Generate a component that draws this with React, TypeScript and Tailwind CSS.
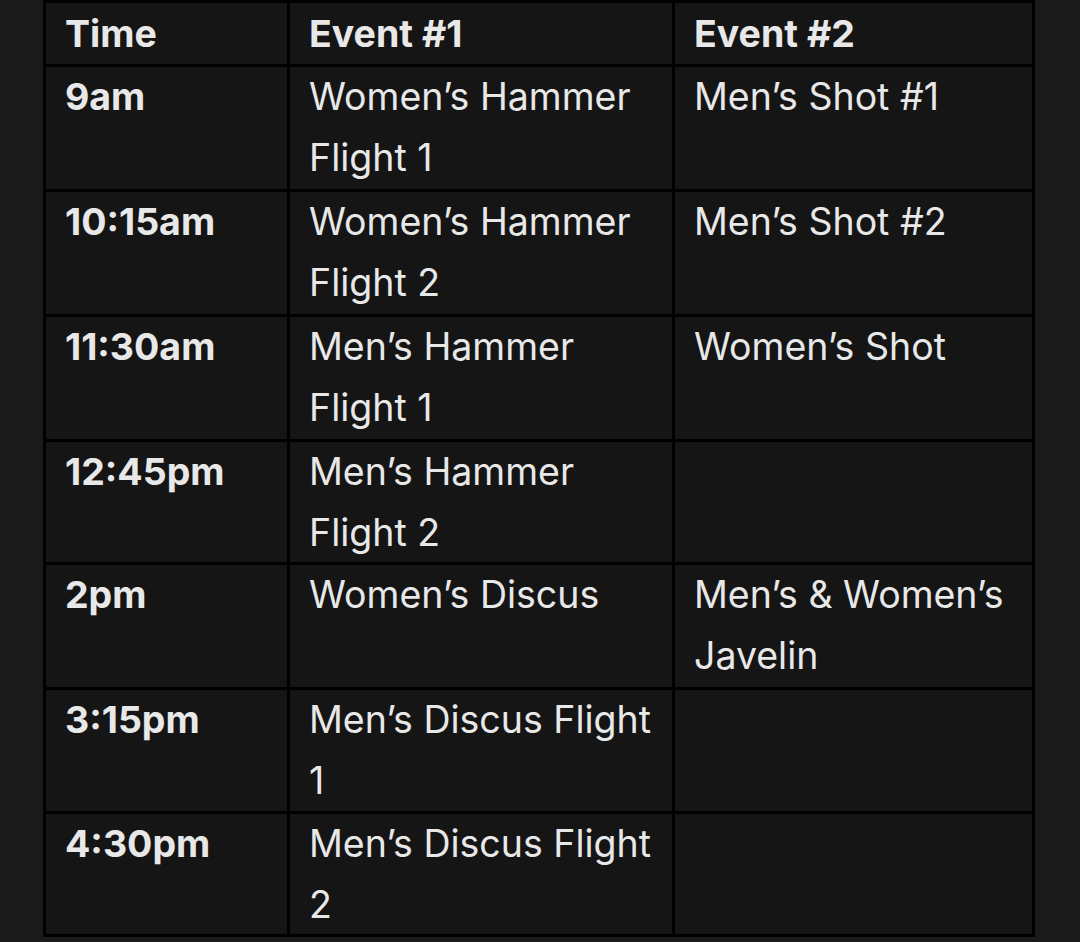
import React from "react";

const rows: [string, string, string][] = [
  ["9am", "Women\u2019s Hammer Flight 1", "Men\u2019s Shot #1"],
  ["10:15am", "Women\u2019s Hammer Flight 2", "Men\u2019s Shot #2"],
  ["11:30am", "Men\u2019s Hammer Flight 1", "Women\u2019s Shot"],
  ["12:45pm", "Men\u2019s Hammer Flight 2", ""],
  ["2pm", "Women\u2019s Discus", "Men\u2019s & Women\u2019s Javelin"],
  ["3:15pm", "Men\u2019s Discus Flight 1", ""],
  ["4:30pm", "Men\u2019s Discus Flight 2", ""],
];

export default function App() {
  return (
    <div
      className="w-[1080px] h-[942px] bg-[#1a1a1a] pl-[43px] text-[#e8e8e8] overflow-hidden"
      style={{ fontFamily: "Inter, 'Noto Sans', sans-serif" }}
    >
      <div className="w-[992px] bg-black p-[3px] grid grid-cols-[241px_382px_357px] grid-rows-[61px_122px_122px_122px_120px_122px_121px_120px] gap-[3px] text-[37.5px] leading-[60.5px]">
        <div className="bg-[#151515] pl-[19px] pr-[16px] leading-[61px] font-bold">Time</div>
        <div className="bg-[#151515] pl-[19px] pr-[16px] leading-[61px] font-bold">Event #1</div>
        <div className="bg-[#151515] pl-[19px] pr-[16px] leading-[61px] font-bold">Event #2</div>
        {rows.map(([t, a, b], i) => (
          <React.Fragment key={i}>
            <div className="bg-[#151515] pl-[19px] pr-[16px] font-bold">{t}</div>
            <div className="bg-[#151515] pl-[19px] pr-[16px]">{a}</div>
            <div className="bg-[#151515] pl-[19px] pr-[16px]">{b}</div>
          </React.Fragment>
        ))}
      </div>
    </div>
  );
}
